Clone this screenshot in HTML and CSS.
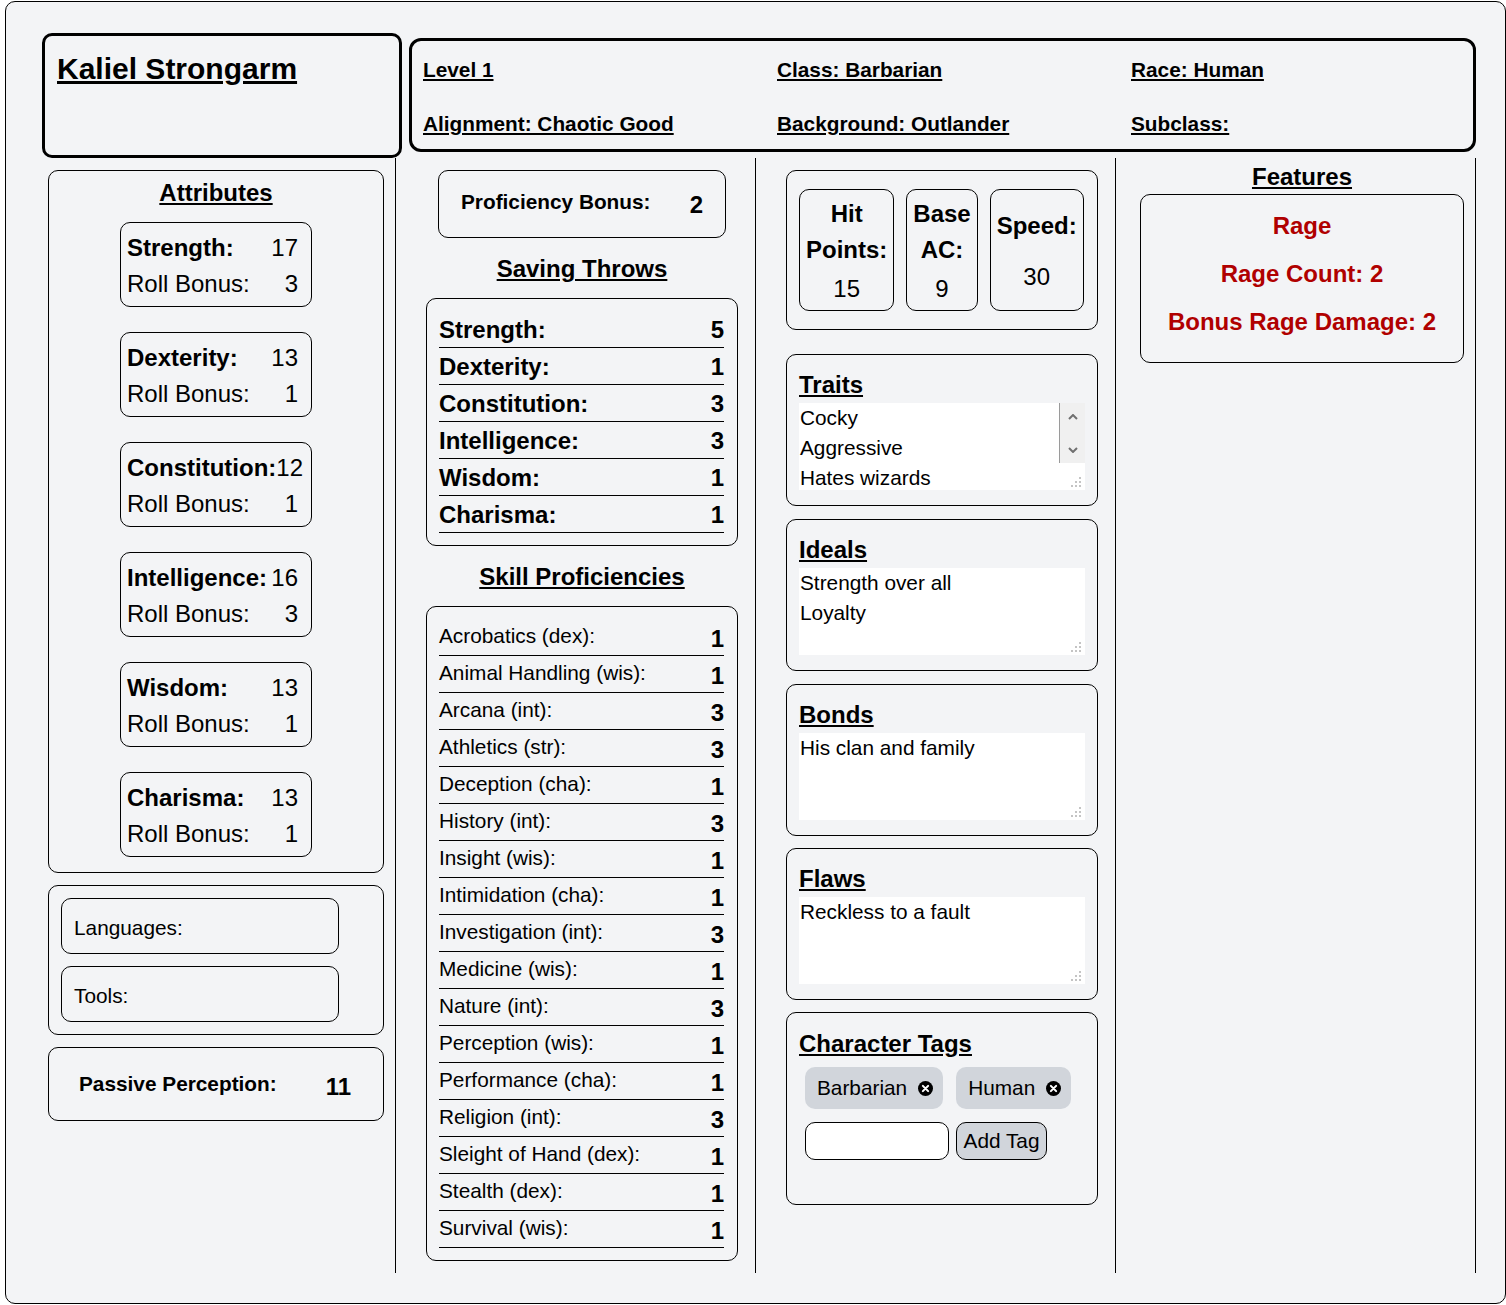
FILE: index.html
```html
<!DOCTYPE html>
<html lang="en">
<head>
<meta charset="utf-8">
<title>Kaliel Strongarm</title>
<link rel="stylesheet" href="styles.css">
</head>
<body>
<div class="sheet">
  <header class="top">
    <div class="name-box"><h1 class="name">Kaliel Strongarm</h1></div>
    <div class="info-box">
      <span class="info">Level 1</span>
      <span class="info">Class: Barbarian</span>
      <span class="info">Race: Human</span>
      <span class="info">Alignment: Chaotic Good</span>
      <span class="info">Background: Outlander</span>
      <span class="info">Subclass:</span>
    </div>
  </header>

  <main class="cols">
    <section class="col col1">
      <div class="box attrs">
        <h2 class="heading">Attributes</h2>
        <div class="attr-list">
          <div class="attr"><div class="attr-row"><b>Strength:</b><span>17</span></div><div class="attr-row"><span>Roll Bonus:</span><span>3</span></div></div>
          <div class="attr"><div class="attr-row"><b>Dexterity:</b><span>13</span></div><div class="attr-row"><span>Roll Bonus:</span><span>1</span></div></div>
          <div class="attr"><div class="attr-row"><b>Constitution:</b><span>12</span></div><div class="attr-row"><span>Roll Bonus:</span><span>1</span></div></div>
          <div class="attr"><div class="attr-row"><b>Intelligence:</b><span>16</span></div><div class="attr-row"><span>Roll Bonus:</span><span>3</span></div></div>
          <div class="attr"><div class="attr-row"><b>Wisdom:</b><span>13</span></div><div class="attr-row"><span>Roll Bonus:</span><span>1</span></div></div>
          <div class="attr"><div class="attr-row"><b>Charisma:</b><span>13</span></div><div class="attr-row"><span>Roll Bonus:</span><span>1</span></div></div>
        </div>
      </div>
      <div class="box langs">
        <div class="lang-item">Languages:</div>
        <div class="lang-item">Tools:</div>
      </div>
      <div class="box passive">
        <b class="passive-label">Passive Perception:</b>
        <b class="passive-val">11</b>
      </div>
    </section>

    <section class="col col2">
      <div class="box prof">
        <b class="prof-label">Proficiency Bonus:</b>
        <b class="prof-val">2</b>
      </div>
      <h2 class="heading sub">Saving Throws</h2>
      <div class="box list">
        <div class="save-row"><span>Strength:</span><span>5</span></div>
        <div class="save-row"><span>Dexterity:</span><span>1</span></div>
        <div class="save-row"><span>Constitution:</span><span>3</span></div>
        <div class="save-row"><span>Intelligence:</span><span>3</span></div>
        <div class="save-row"><span>Wisdom:</span><span>1</span></div>
        <div class="save-row"><span>Charisma:</span><span>1</span></div>
      </div>
      <h2 class="heading sub">Skill Proficiencies</h2>
      <div class="box list">
        <div class="skill-row"><span>Acrobatics (dex):</span><b>1</b></div>
        <div class="skill-row"><span>Animal Handling (wis):</span><b>1</b></div>
        <div class="skill-row"><span>Arcana (int):</span><b>3</b></div>
        <div class="skill-row"><span>Athletics (str):</span><b>3</b></div>
        <div class="skill-row"><span>Deception (cha):</span><b>1</b></div>
        <div class="skill-row"><span>History (int):</span><b>3</b></div>
        <div class="skill-row"><span>Insight (wis):</span><b>1</b></div>
        <div class="skill-row"><span>Intimidation (cha):</span><b>1</b></div>
        <div class="skill-row"><span>Investigation (int):</span><b>3</b></div>
        <div class="skill-row"><span>Medicine (wis):</span><b>1</b></div>
        <div class="skill-row"><span>Nature (int):</span><b>3</b></div>
        <div class="skill-row"><span>Perception (wis):</span><b>1</b></div>
        <div class="skill-row"><span>Performance (cha):</span><b>1</b></div>
        <div class="skill-row"><span>Religion (int):</span><b>3</b></div>
        <div class="skill-row"><span>Sleight of Hand (dex):</span><b>1</b></div>
        <div class="skill-row"><span>Stealth (dex):</span><b>1</b></div>
        <div class="skill-row"><span>Survival (wis):</span><b>1</b></div>
      </div>
    </section>

    <section class="col col3">
      <div class="box stats">
        <div class="stat"><b>Hit Points:</b><span>15</span></div>
        <div class="stat"><b>Base AC:</b><span>9</span></div>
        <div class="stat"><b>Speed:</b><span>30</span></div>
      </div>
      <div class="box note-box first">
        <h3 class="note-title">Traits</h3>
        <div class="note-wrap">
          <textarea class="note" readonly>Cocky
Aggressive
Hates wizards</textarea>
          <div class="fake-scroll">
            <svg class="chev" viewBox="0 0 10 6" width="10" height="6"><path d="M1 5 L5 1 L9 5" fill="none" stroke="#707070" stroke-width="2"/></svg>
            <svg class="chev" viewBox="0 0 10 6" width="10" height="6"><path d="M1 1 L5 5 L9 1" fill="none" stroke="#707070" stroke-width="2"/></svg>
          </div>
          <svg class="grip" viewBox="0 0 10 10" width="10" height="10"><g fill="#c4c4c4"><rect x="8" y="0" width="2" height="2"/><rect x="4" y="4" width="2" height="2"/><rect x="8" y="4" width="2" height="2"/><rect x="0" y="8" width="2" height="2"/><rect x="4" y="8" width="2" height="2"/><rect x="8" y="8" width="2" height="2"/></g></svg>
        </div>
      </div>
      <div class="box note-box">
        <h3 class="note-title">Ideals</h3>
        <div class="note-wrap">
          <textarea class="note" readonly>Strength over all
Loyalty</textarea>
          <svg class="grip" viewBox="0 0 10 10" width="10" height="10"><g fill="#c4c4c4"><rect x="8" y="0" width="2" height="2"/><rect x="4" y="4" width="2" height="2"/><rect x="8" y="4" width="2" height="2"/><rect x="0" y="8" width="2" height="2"/><rect x="4" y="8" width="2" height="2"/><rect x="8" y="8" width="2" height="2"/></g></svg>
        </div>
      </div>
      <div class="box note-box">
        <h3 class="note-title">Bonds</h3>
        <div class="note-wrap">
          <textarea class="note" readonly>His clan and family</textarea>
          <svg class="grip" viewBox="0 0 10 10" width="10" height="10"><g fill="#c4c4c4"><rect x="8" y="0" width="2" height="2"/><rect x="4" y="4" width="2" height="2"/><rect x="8" y="4" width="2" height="2"/><rect x="0" y="8" width="2" height="2"/><rect x="4" y="8" width="2" height="2"/><rect x="8" y="8" width="2" height="2"/></g></svg>
        </div>
      </div>
      <div class="box note-box tight">
        <h3 class="note-title">Flaws</h3>
        <div class="note-wrap">
          <textarea class="note" readonly>Reckless to a fault</textarea>
          <svg class="grip" viewBox="0 0 10 10" width="10" height="10"><g fill="#c4c4c4"><rect x="8" y="0" width="2" height="2"/><rect x="4" y="4" width="2" height="2"/><rect x="8" y="4" width="2" height="2"/><rect x="0" y="8" width="2" height="2"/><rect x="4" y="8" width="2" height="2"/><rect x="8" y="8" width="2" height="2"/></g></svg>
        </div>
      </div>
      <div class="box tags-box">
        <h3 class="note-title">Character Tags</h3>
        <div class="chips">
          <span class="chip">Barbarian <svg class="x-icon" viewBox="0 0 16 16" width="15" height="15"><circle cx="8" cy="8" r="8" fill="#000"/><path d="M5.2 5.2 L10.8 10.8 M10.8 5.2 L5.2 10.8" stroke="#fff" stroke-width="2.2" stroke-linecap="round"/></svg></span>
          <span class="chip">Human <svg class="x-icon" viewBox="0 0 16 16" width="15" height="15"><circle cx="8" cy="8" r="8" fill="#000"/><path d="M5.2 5.2 L10.8 10.8 M10.8 5.2 L5.2 10.8" stroke="#fff" stroke-width="2.2" stroke-linecap="round"/></svg></span>
        </div>
        <div class="tag-form">
          <input class="tag-input" type="text">
          <button class="tag-btn" type="button">Add Tag</button>
        </div>
      </div>
    </section>

    <section class="col col4">
      <h2 class="heading feat-head">Features</h2>
      <div class="box features">
        <b class="feat">Rage</b>
        <b class="feat">Rage Count: 2</b>
        <b class="feat">Bonus Rage Damage: 2</b>
      </div>
    </section>
  </main>
</div>
</body>
</html>
```

FILE: styles.css
```css
* { box-sizing: border-box; }

body {
  margin: 0;
  background: #ffffff;
  font-family: "Liberation Sans", Arial, sans-serif;
  color: #000;
}

.sheet {
  margin: 1px 0 0 5px;
  width: 1501px;
  border: 1px solid #000;
  border-radius: 10px;
  background: #f3f4f6;
  padding: 31px 29px 30px 30px;
}

/* header */
.top {
  display: flex;
  align-items: flex-start;
}

.name-box {
  margin-left: 6px;
  width: 360px;
  height: 125px;
  border: 3px solid #000;
  border-radius: 10px;
  padding: 16px 12px 0;
}

.name {
  margin: 0;
  font-size: 30px;
  line-height: 34px;
  font-weight: bold;
  text-decoration: underline;
}

.info-box {
  margin: 5px 0 0 7px;
  width: 1067px;
  height: 114px;
  border: 3px solid #000;
  border-radius: 12px;
  padding: 2px 0 0 11px;
  display: grid;
  grid-template-columns: repeat(3, 354px);
  grid-template-rows: 54px 54px;
  align-items: center;
}

.info {
  font-size: 20.8px;
  font-weight: bold;
  text-decoration: underline;
}

/* columns */
.cols {
  display: grid;
  grid-template-columns: repeat(4, 360px);
}

.col {
  border-right: 1px solid #000;
}

.col1 { padding: 12px 11px 0 12px; }
.col2 { padding: 12px 17px 12px 30px; }
.col3 { padding: 12px 17px 0 30px; }
.col4 { padding: 5px 11px 0 24px; }

.box {
  border: 1px solid #000;
  border-radius: 10px;
}

.heading {
  margin: 0;
  font-size: 24px;
  line-height: 28px;
  font-weight: bold;
  text-decoration: underline;
  text-align: center;
}

/* attributes */
.attrs {
  padding: 8px 0 15px;
}

.attr-list {
  margin-top: 15px;
  display: flex;
  flex-direction: column;
  align-items: center;
  gap: 25px;
}

.attr {
  width: 192px;
  border: 1px solid #000;
  border-radius: 10px;
  padding: 7px 13px 4px 6px;
  font-size: 24px;
  line-height: 36px;
}

.attr-row {
  display: flex;
  justify-content: space-between;
  white-space: nowrap;
}

.langs {
  margin-top: 12px;
  padding: 12px;
  display: flex;
  flex-direction: column;
  gap: 12px;
}

.lang-item {
  width: 278px;
  height: 56px;
  border: 1px solid #000;
  border-radius: 10px;
  padding: 3px 0 0 12px;
  display: flex;
  align-items: center;
  font-size: 20.8px;
}

.passive {
  margin-top: 12px;
  height: 74px;
  display: flex;
  align-items: center;
  justify-content: space-between;
  padding: 0 32px 0 30px;
}

.passive-label { font-size: 20.8px; }
.passive-val { font-size: 24px; margin-top: 5px; }

/* column 2 */
.prof {
  margin: 0 12px;
  height: 68px;
  display: flex;
  align-items: center;
  justify-content: space-between;
  padding: 0 22px;
}

.prof-label { font-size: 20.8px; margin-top: -4px; }
.prof-val { font-size: 24px; margin-top: 2px; }

.sub {
  margin: 17px 0 15px;
}

.list {
  padding: 12px 13px 12px 12px;
}

.save-row {
  height: 37px;
  border-bottom: 1px solid #000;
  display: flex;
  align-items: center;
  justify-content: space-between;
  font-size: 24px;
  font-weight: bold;
  padding-top: 2px;
}

.skill-row {
  height: 37px;
  border-bottom: 1px solid #000;
  display: flex;
  align-items: center;
  justify-content: space-between;
  font-size: 20.8px;
}

.skill-row span {
  margin-top: -3px;
}

.skill-row b {
  font-size: 24px;
  margin-top: 3px;
}

/* column 3 */
.stats {
  padding: 18px 13px 18px 12px;
  display: flex;
  gap: 12px;
}

.stat {
  width: min-content;
  height: 122px;
  border: 1px solid #000;
  border-radius: 10px;
  padding: 3px 6px 0;
  display: flex;
  flex-direction: column;
  justify-content: space-evenly;
  text-align: center;
  font-size: 24px;
  line-height: 36px;
}

.note-box {
  margin-top: 13px;
  padding: 16px 12px 15px;
}

.note-box.first {
  margin-top: 24px;
}

.note-box.tight {
  margin-top: 12px;
}

.note-title {
  margin: 0 0 4px;
  font-size: 24px;
  line-height: 28px;
  font-weight: bold;
  text-decoration: underline;
}

.note-wrap {
  position: relative;
}

.note {
  display: block;
  width: 100%;
  height: 87px;
  border: none;
  outline: none;
  background: #fff;
  padding: 0 1px;
  margin: 0;
  overflow: hidden;
  font-family: "Liberation Sans", Arial, sans-serif;
  font-size: 20.8px;
  line-height: 30px;
  color: #000;
  resize: none;
}

.fake-scroll {
  position: absolute;
  top: 0;
  right: 0;
  width: 26px;
  height: 60px;
  background: #f0f0f0;
  border-left: 1px solid #9a9a9a;
  display: flex;
  flex-direction: column;
  align-items: center;
  justify-content: space-between;
  padding: 11px 0 10px;
}

.chev { display: block; }

.grip {
  position: absolute;
  right: 4px;
  bottom: 3px;
  display: block;
}

.tags-box {
  margin-top: 12px;
  padding: 17px 12px 44px;
}

.chips {
  margin-top: 9px;
  padding-left: 6px;
  display: flex;
  gap: 13px;
}

.chip {
  height: 42px;
  border-radius: 10px;
  background: #d1d5db;
  padding: 0 10px 0 12px;
  display: flex;
  align-items: center;
  gap: 11px;
  font-size: 20.8px;
}

.x-icon { display: block; }

.tag-form {
  margin-top: 13px;
  padding-left: 6px;
  display: flex;
  gap: 7px;
}

.tag-input {
  width: 144px;
  height: 38px;
  border: 1px solid #000;
  border-radius: 10px;
  background: #fff;
  margin: 0;
}

.tag-btn {
  width: 91px;
  height: 38px;
  border: 1px solid #000;
  border-radius: 10px;
  background: #d1d5db;
  padding: 0;
  margin: 0;
  font-family: "Liberation Sans", Arial, sans-serif;
  font-size: 20.8px;
  color: #000;
}

/* column 4 */
.feat-head {
  margin-bottom: 3px;
}

.features {
  padding: 17px 0 26px;
  display: flex;
  flex-direction: column;
  align-items: center;
  gap: 20px;
}

.feat {
  font-size: 24px;
  line-height: 28px;
  color: #b00000;
}
```
